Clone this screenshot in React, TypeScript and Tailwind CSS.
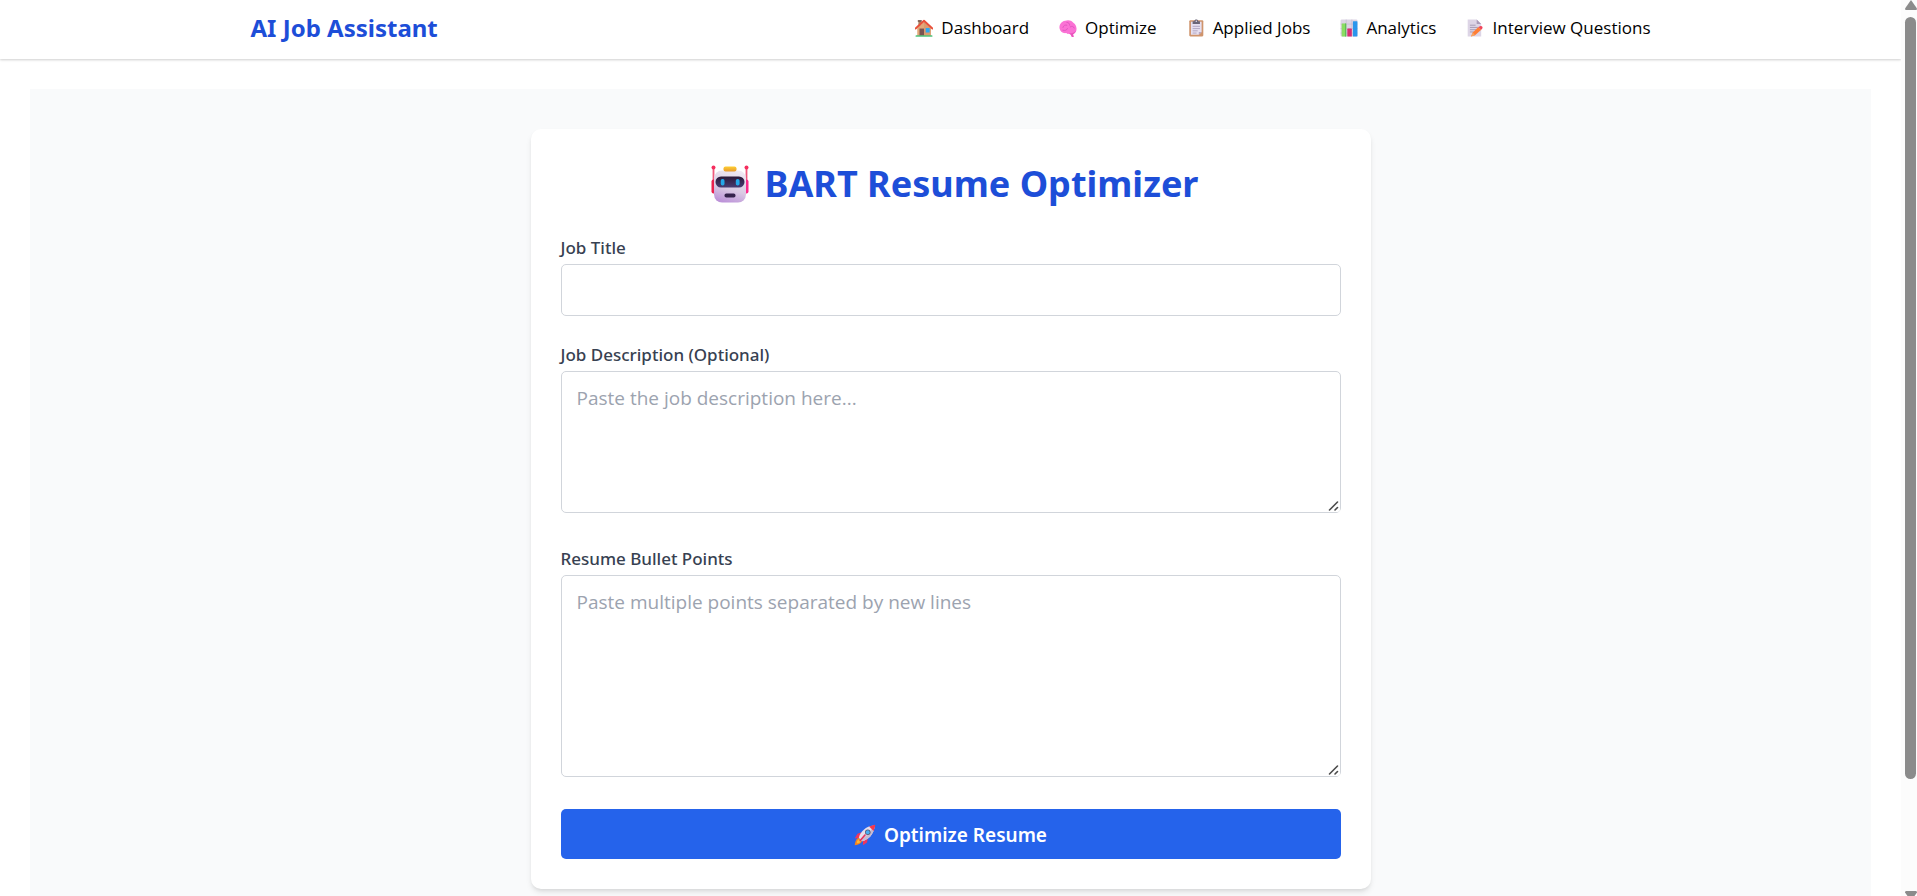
import { useId } from "react";
import type { ReactNode } from "react";

function HouseIcon() {
  return (
    <svg viewBox="0 0 32 32" className="size-[18px] shrink-0" aria-hidden="true">
      <rect x="6" y="3" width="5" height="10" fill="#a9825f" />
      <rect x="5" y="2" width="7" height="3" fill="#7d5a52" />
      <path d="M4 16 16 5l12 11v14H4z" fill="#e3a878" />
      <path d="M16 5 28 16v14H16z" fill="#d99c70" />
      <path d="M1 17 16 3l15 14" fill="none" stroke="#e8503a" strokeWidth="3.4" strokeLinejoin="round" strokeLinecap="round" />
      <rect x="8" y="17" width="8" height="13" fill="#7a5350" />
      <rect x="19" y="16" width="7" height="8" fill="#2ea8f0" />
      <rect x="1" y="29" width="30" height="2.5" rx="1" fill="#4fc27a" />
    </svg>
  );
}

function BrainIcon() {
  return (
    <svg viewBox="0 0 32 32" className="size-[18px] shrink-0" aria-hidden="true">
      <path d="M1 17C0 10 4 4 11 3c5-2 11-1 14 3 5 3 7 9 6 14-1 4-4 6-6 7l1 5h-3l-3-5c-3 0-5 0-7-2C6 26 2 22 1 17z" fill="#fb72d5" />
      <path d="M7 15c1-4 4-5 7-4M14 6c3 0 5 2 5 5M20 14c3-2 6-1 7 2M7 20c4 1 7 0 8-3" fill="none" stroke="#dc55bd" strokeWidth="1.6" strokeLinecap="round" />
      <path d="M18 25c5 1 9 0 12-4-1 4-3 5-5 6l1 5h-3l-2-4z" fill="#ea55bd" />
    </svg>
  );
}

function ClipboardIcon() {
  return (
    <svg viewBox="0 0 32 32" className="size-[18px] shrink-0" aria-hidden="true">
      <rect x="4" y="2" width="25" height="29" rx="2" fill="#cf946c" />
      <path d="M7 5h19v18l-5 5H7z" fill="#e6dff0" />
      <path d="M26 23h-5v5z" fill="#b6a5c4" />
      <path d="M10 13h13M10 17h13M10 21h9M10 25h7" stroke="#b0a6c1" strokeWidth="1.7" />
      <path d="M10 4h3c0-4 7-4 7 0h3v5H10z" fill="#6b6577" />
      <circle cx="16.5" cy="4" r="1.3" fill="#e9e2f2" />
    </svg>
  );
}

function ChartIcon() {
  return (
    <svg viewBox="0 0 32 32" className="size-[18px] shrink-0" aria-hidden="true">
      <rect x="1" y="1" width="30" height="30" rx="2" fill="#dcd4e4" />
      <path d="M1 9h30M1 17h30M1 25h30M11 1v30M21 1v30" stroke="#c4bacf" strokeWidth="1.2" />
      <rect x="3" y="8" width="8" height="23" rx="1" fill="#8bdc62" />
      <rect x="9" y="8" width="2" height="23" fill="#5dbb58" />
      <rect x="13" y="17" width="8" height="14" rx="1" fill="#d92d72" />
      <rect x="23" y="4" width="8" height="27" rx="1" fill="#2b96ec" />
    </svg>
  );
}

function MemoIcon() {
  return (
    <svg viewBox="0 0 32 32" className="size-[18px] shrink-0" aria-hidden="true">
      <path d="M3 1h16l8 8v22H3z" fill="#ddd5e6" />
      <path d="M19 1l8 8h-8z" fill="#a99bb8" />
      <path d="M7 11h10M7 15h14M7 19h11M7 23h7" stroke="#a59ab3" strokeWidth="1.7" />
      <path d="M12 24 22 14l5 5-11 10-7 2z" fill="#ff7e36" />
      <path d="M22 14l3-1c2-2 6 1 4 4l-2 2z" fill="#f0455b" />
      <path d="M12 24l4 5-7 2z" fill="#f5a663" />
    </svg>
  );
}

function RobotIcon() {
  return (
    <svg viewBox="-8 0 46 38" className="h-[38px] w-[46px] shrink-0" aria-hidden="true">
      <defs>
        <linearGradient id="robot-head" x1="0.7" y1="0" x2="0.4" y2="1">
          <stop offset="0" stopColor="#f0e9f3" />
          <stop offset="0.6" stopColor="#d9cae3" />
          <stop offset="1" stopColor="#bd94d9" />
        </linearGradient>
        <linearGradient id="robot-visor" x1="0" y1="0" x2="0" y2="1">
          <stop offset="0" stopColor="#2b1837" />
          <stop offset="1" stopColor="#483d74" />
        </linearGradient>
        <linearGradient id="robot-cap" x1="0" y1="0" x2="0" y2="1">
          <stop offset="0" stopColor="#ffcf32" />
          <stop offset="1" stopColor="#e7992f" />
        </linearGradient>
      </defs>
      <path d="M2.500 3v14M35.500 3v14" stroke="#ee5a7d" strokeWidth="1.8" />
      <circle cx="2.5" cy="2.5" r="2" fill="#f52e5e" />
      <circle cx="35.5" cy="2.5" r="2" fill="#f52e5e" />
      <rect x="0.5" y="14.5" width="5" height="14" rx="2" fill="#e9204f" />
      <rect x="32.5" y="14.5" width="5" height="14" rx="2" fill="#fb2a8c" />
      <rect x="3" y="5.5" width="32" height="32" rx="8" fill="url(#robot-head)" />
      <rect x="12.5" y="1.5" width="13" height="5" rx="2" fill="url(#robot-cap)" />
      <rect x="4.5" y="11.5" width="29" height="11" rx="5.5" fill="url(#robot-visor)" />
      <rect x="9.7" y="14" width="3.8" height="6.5" rx="1.7" fill="#25a7e8" />
      <rect x="24.8" y="14" width="3.8" height="6.5" rx="1.7" fill="#25a7e8" />
      <rect x="13.5" y="28.5" width="11" height="4" rx="1.8" fill="#35234c" />
    </svg>
  );
}

function RocketIcon() {
  return (
    <svg viewBox="0 0 32 32" className="size-[22px] shrink-0" aria-hidden="true">
      <path d="M8 20c-4 0-6 4-7 11 6-1 10-3 11-7z" fill="#f58220" />
      <path d="M7 22c-2 1-3 3-3 6 3 0 5-1 6-3z" fill="#ffb92e" />
      <path d="M11 12 5 14l-4 7 8-1zM20 21l-1 6-6 4 0-8z" fill="#ee365e" />
      <path d="M7 20C9 11 17 3 29 2l1 1c-1 12-9 20-18 22z" fill="#e4ddec" />
      <path d="M12 25c9-2 17-10 18-22l-4 4C21 15 16 20 9 22z" fill="#c5bad2" />
      <path d="M22 3.500 30 1l1 1-2.500 8z" fill="#f4374e" />
      <circle cx="20" cy="12" r="4" fill="#5a5870" />
      <circle cx="20" cy="12" r="2.8" fill="#46aef4" />
      <path d="M16 16 9 24" stroke="#e8315c" strokeWidth="2.4" strokeLinecap="round" />
    </svg>
  );
}

const links: { label: string; href: string; icon: ReactNode }[] = [
  { label: "Dashboard", href: "#dashboard", icon: <HouseIcon /> },
  { label: "Optimize", href: "#optimize", icon: <BrainIcon /> },
  { label: "Applied Jobs", href: "#applied", icon: <ClipboardIcon /> },
  { label: "Analytics", href: "#analytics", icon: <ChartIcon /> },
  { label: "Interview Questions", href: "#interview", icon: <MemoIcon /> },
];

const control =
  "block w-full rounded-[5px] border border-[#d1d5db] bg-white px-[15px] pt-[11px] pb-[9px] font-['Open_Sans',sans-serif] text-[19px] leading-[30px] text-black placeholder:text-[#9ca3af]";

function Field({ label, children }: { label: string; children: (id: string) => ReactNode }) {
  const id = useId();
  return (
    <div className="flex flex-col gap-[3px]">
      <label htmlFor={id} className="text-[17px] leading-[27px] font-medium text-[#374151]">
        {label}
      </label>
      {children(id)}
    </div>
  );
}

function TextArea({ id, rows, placeholder }: { id: string; rows: number; placeholder: string }) {
  return (
    <div className="relative">
      <textarea id={id} rows={rows} placeholder={placeholder} className={`${control} resize-y`} />
      <svg viewBox="0 0 14 14" className="pointer-events-none absolute right-px bottom-px size-[14px]" aria-hidden="true">
        <rect width="14" height="14" rx="3" fill="#ffffff" />
        <path d="M3.500 12 11.500 4M9 12 11.500 9.500" stroke="#4b4b4b" strokeWidth="1.6" strokeLinecap="round" />
      </svg>
    </div>
  );
}

function ScrollTrack() {
  return (
    <div className="flex h-full w-4 shrink-0 flex-col items-center bg-[#fcfcfc] pl-[3px]" aria-hidden="true">
      <svg viewBox="0 0 12 10" className="h-[10px] w-3 shrink-0">
        <path d="M6 0 12 8.500Q12 10 11 10H1Q0 10 0 8.500z" fill="#8b8b8b" />
      </svg>
      <div className="flex w-full flex-1 flex-col pt-[7px] pb-[7px]">
        <div className="w-[11px] grow-[762] basis-0 self-center rounded-full bg-[#8b8b8b]" />
        <div className="grow-[105] basis-0" />
      </div>
      <svg viewBox="0 0 12 5" className="h-[5px] w-3 shrink-0">
        <path d="M1 0H11Q12 0 12 1.500L9.500 5H2.500L0 1.500Q0 0 1 0z" fill="#8b8b8b" />
      </svg>
    </div>
  );
}

export default function App() {
  return (
    <div className="flex h-screen bg-white font-['Noto_Sans',sans-serif] text-black">
      <div className="min-w-0 flex-1 overflow-y-auto [scrollbar-width:none]">
        <nav className="relative bg-white px-5 shadow-[0_1px_3px_rgba(0,0,0,0.1),0_1px_2px_rgba(0,0,0,0.1)]">
          <div className="mx-auto flex max-w-[1400px] items-center justify-between pt-[10px] pb-[14px]">
            <a href="#home" className="text-[24px] leading-[35px] font-bold text-[#1d4ed8]">
              AI Job Assistant
            </a>
            <ul className="flex gap-[30px] font-['Open_Sans',sans-serif]">
              {links.map((link) => (
                <li key={link.label}>
                  <a href={link.href} className="flex items-center gap-2 text-[17px] leading-[25px]">
                    {link.icon}
                    {link.label}
                  </a>
                </li>
              ))}
            </ul>
          </div>
        </nav>

        <div className="p-[30px]">
          <main className="min-h-screen bg-[#f9fafb] px-5 py-10">
            <form
              className="mx-auto max-w-[840px] rounded-[10px] bg-white p-[30px] shadow-[0_4px_6px_-1px_rgba(0,0,0,0.1),0_2px_4px_-2px_rgba(0,0,0,0.1)]"
              onSubmit={(event) => event.preventDefault()}
            >
              <h1 className="mb-7 flex items-center justify-center gap-4 pt-[2px] text-[36px] leading-[45px] font-bold text-[#1d4ed8]">
                <RobotIcon />
                BART Resume Optimizer
              </h1>
              <div className="mb-[25px]">
                <Field label="Job Title">{(id) => <input id={id} type="text" className={control} />}</Field>
              </div>
              <div className="mb-8">
                <Field label="Job Description (Optional)">
                  {(id) => <TextArea id={id} rows={4} placeholder="Paste the job description here..." />}
                </Field>
              </div>
              <div className="mb-8">
                <Field label="Resume Bullet Points">
                  {(id) => <TextArea id={id} rows={6} placeholder="Paste multiple points separated by new lines" />}
                </Field>
              </div>
              <button
                type="submit"
                className="flex w-full items-center justify-center gap-2 rounded-[5px] bg-[#2563eb] pt-[11px] pb-[9px] text-[19px] leading-[30px] font-semibold text-white"
              >
                <RocketIcon />
                Optimize Resume
              </button>
            </form>
          </main>
        </div>
      </div>
      <ScrollTrack />
    </div>
  );
}
